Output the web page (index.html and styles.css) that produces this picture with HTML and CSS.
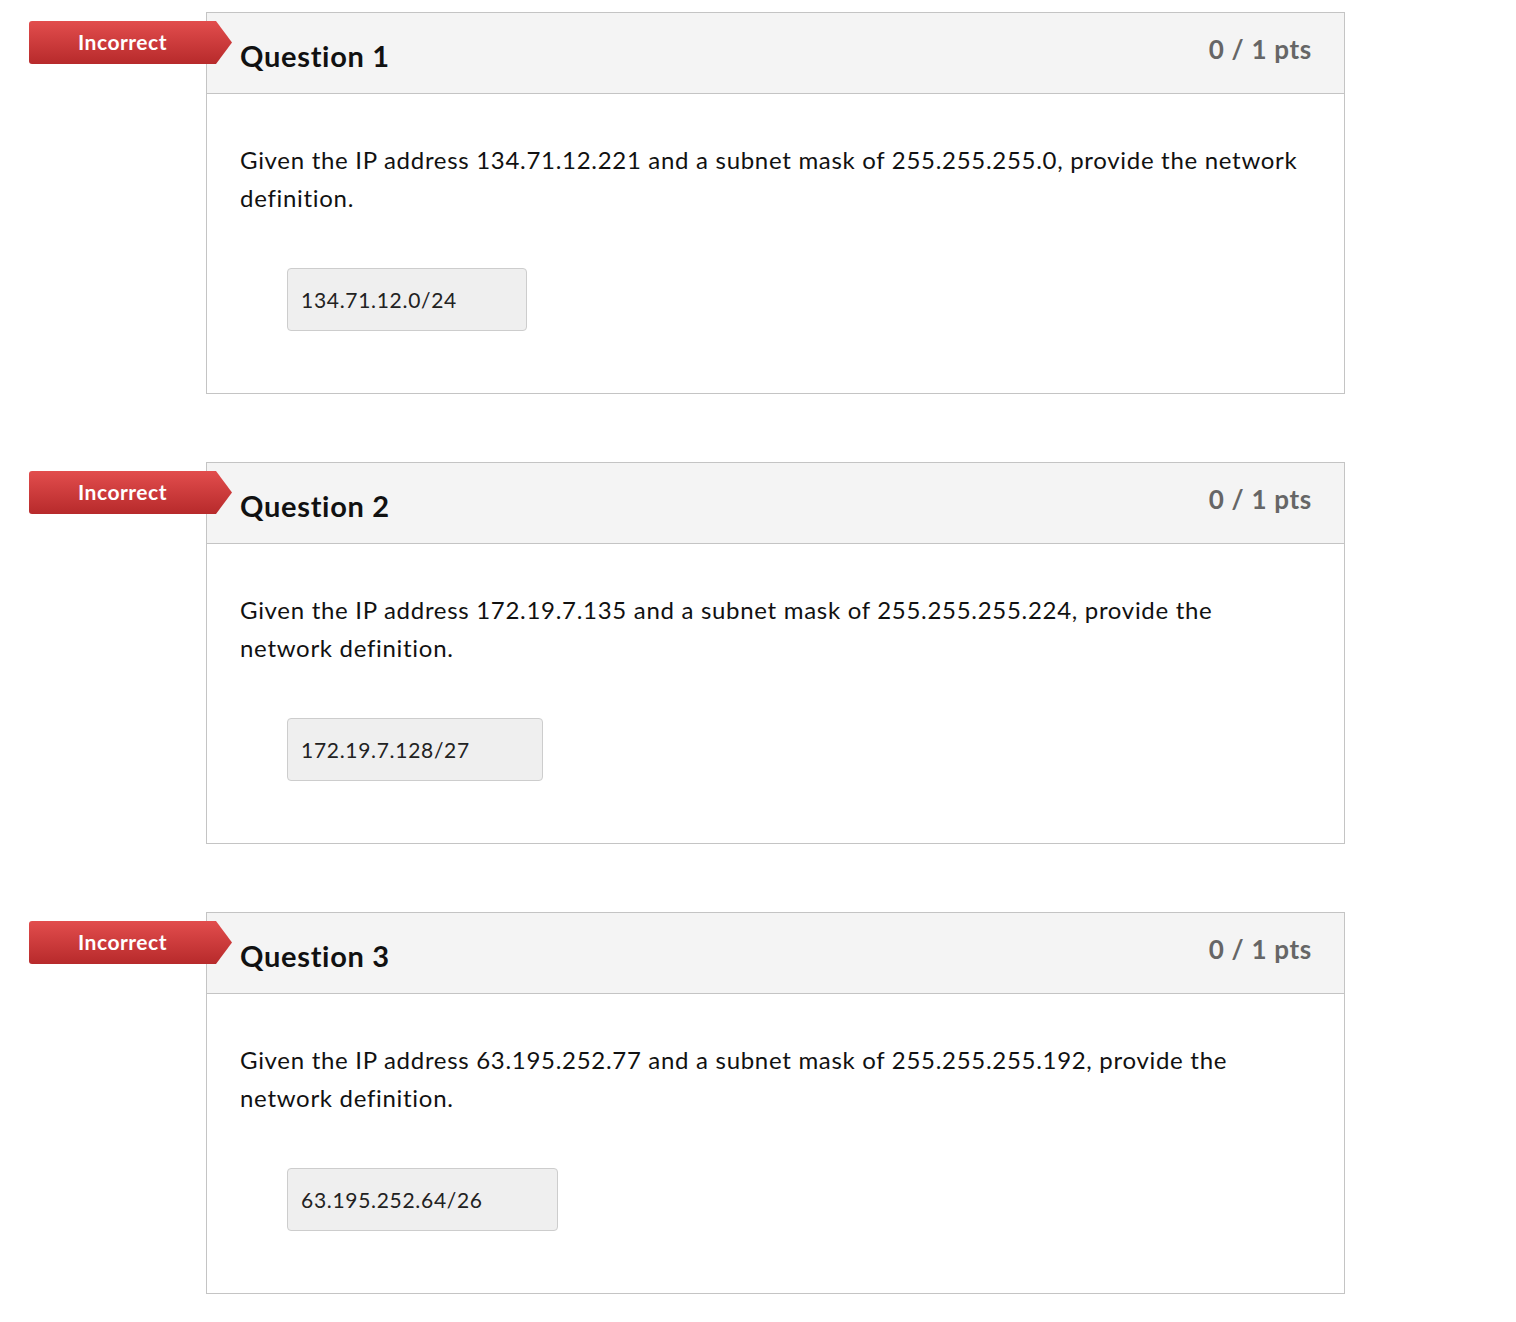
FILE: index.html
```html
<!DOCTYPE html>
<html lang="en">
<head>
    <meta charset="UTF-8">
    <title>Quiz results</title>
    <link rel="stylesheet" href="styles.css">
</head>
<body>
    <div class="quiz">
        <div class="question">
            <div class="badge">Incorrect</div>
            <div class="question-header">
                <h2>Question 1</h2>
                <span class="pts">0 / 1 pts</span>
            </div>
            <div class="question-body">
                <p>Given the IP address 134.71.12.221 and a subnet mask of 255.255.255.0, provide the network definition.</p>
                <div class="answer answer-1">134.71.12.0/24</div>
            </div>
        </div>

        <div class="question">
            <div class="badge">Incorrect</div>
            <div class="question-header">
                <h2>Question 2</h2>
                <span class="pts">0 / 1 pts</span>
            </div>
            <div class="question-body">
                <p>Given the IP address 172.19.7.135 and a subnet mask of 255.255.255.224, provide the network definition.</p>
                <div class="answer answer-2">172.19.7.128/27</div>
            </div>
        </div>

        <div class="question">
            <div class="badge">Incorrect</div>
            <div class="question-header">
                <h2>Question 3</h2>
                <span class="pts">0 / 1 pts</span>
            </div>
            <div class="question-body">
                <p>Given the IP address 63.195.252.77 and a subnet mask of 255.255.255.192, provide the network definition.</p>
                <div class="answer answer-3">63.195.252.64/26</div>
            </div>
        </div>
    </div>
</body>
</html>
```

FILE: styles.css
```css
*{
    margin: 0;
    padding: 0;
    box-sizing: border-box;
    font-family: 'Lato', 'Liberation Sans', sans-serif;
    letter-spacing: 0.7px;
}
body{
    background: #fff;
    color: #111;
    padding: 12px 0 0 206px;
}
.quiz{
    width: 1139px;
    display: flex;
    flex-direction: column;
    gap: 68px;
}
.question{
    position: relative;
    border: 1px solid #c4c4c4;
}
.badge{
    position: absolute;
    left: -178px;
    top: 8px;
    width: 203px;
    height: 43px;
    padding-right: 16px;
    color: #fff;
    font-size: 21px;
    font-weight: 700;
    letter-spacing: 0.5px;
    line-height: 42px;
    text-align: center;
    background: linear-gradient(#e24d4d, #b72a2b);
    clip-path: polygon(0 0, 187px 0, 203px 50%, 187px 100%, 0 100%);
    border-radius: 3px 0 0 3px;
}
.question-header{
    height: 81px;
    display: flex;
    justify-content: space-between;
    padding: 0 32px 0 33px;
    background: #f4f4f4;
    border-bottom: 1px solid #c4c4c4;
}
.question-header h2{
    font-size: 29px;
    font-weight: 700;
    padding-top: 25px;
    color: #111;
}
.pts{
    font-size: 26px;
    font-weight: 700;
    color: #666;
    padding-top: 20px;
}
.question-body{
    padding: 47px 41px 62px 33px;
}
.question-body p{
    font-size: 24px;
    line-height: 38px;
    color: #111;
}
.answer{
    margin: 51px 0 0 47px;
    height: 63px;
    padding-left: 13px;
    font-size: 21px;
    line-height: 61px;
    color: #222;
    background: #efefef;
    border: 1px solid #cdcdcd;
    border-radius: 4px;
}
.answer-1{ width: 240px; }
.answer-2{ width: 256px; }
.answer-3{ width: 271px; }
```
